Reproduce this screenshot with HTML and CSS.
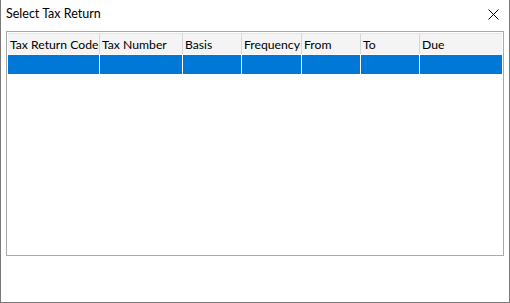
FILE: index.html
```html
<!DOCTYPE html>
<html lang="en">
<head>
  <meta charset="UTF-8" />
  <title>Select Tax Return</title>
  <link rel="stylesheet" href="styles.css">
</head>
<body>
  <div class="window">
    <!-- Title bar -->
    <div class="titlebar">
      <span class="title">Select Tax Return</span>
      <svg class="close" width="11" height="11" viewBox="0 0 11 11">
        <path d="M0.5 0.5 L10.5 10.5 M10.5 0.5 L0.5 10.5" stroke="#000" stroke-width="1" fill="none"/>
      </svg>
    </div>

    <!-- List view -->
    <div class="listview">
      <div class="lv-row lv-header">
        <div class="cell c1">Tax Return Code</div>
        <div class="cell c2">Tax Number</div>
        <div class="cell c3">Basis</div>
        <div class="cell c4">Frequency</div>
        <div class="cell c5">From</div>
        <div class="cell c6">To</div>
        <div class="cell c7">Due</div>
      </div>
      <div class="lv-row lv-selected">
        <div class="cell c1"></div>
        <div class="cell c2"></div>
        <div class="cell c3"></div>
        <div class="cell c4"></div>
        <div class="cell c5"></div>
        <div class="cell c6"></div>
        <div class="cell c7"></div>
      </div>
    </div>
  </div>
</body>
</html>
```
FILE: styles.css
```css
* {
  box-sizing: border-box;
}

body {
  margin: 0;
  background: #fff;
  font-family: 'Lato', 'Noto Sans', sans-serif;
  font-size: 12.5px;
  color: #000;
}

.window {
  width: 510px;
  height: 303px;
  background: #fff;
  border: 1px solid #7a7a7a;
  border-top: none;
}

.titlebar {
  height: 31px;
  display: flex;
  align-items: center;
  justify-content: space-between;
  padding: 0 10px 4px 5px;
}

.title {
  line-height: 16px;
}

.close {
  display: block;
  margin-top: 1px;
}

.listview {
  margin-left: 5px;
  width: 498px;
  height: 225px;
  border: 1px solid #a9a9a9;
  padding: 1px;
}

.lv-row {
  display: flex;
}

.lv-header {
  height: 21px;
  background: #f4f4f4;
  border-top: 1px solid #e6e6e6;
  font-size: 12.2px;
}

.lv-header .cell {
  border-right: 1px solid #d6d6d6;
  padding: 1px 0 0 2px;
  line-height: 19px;
  white-space: nowrap;
  overflow: hidden;
}

.lv-selected {
  height: 19px;
  margin-top: 1px;
  background: #0078d7;
}

.lv-selected .cell {
  border-right: 1px solid #fff;
}

.cell.c1 { width: 92px; }
.cell.c2 { width: 83px; }
.cell.c3 { width: 59px; }
.cell.c4 { width: 60px; }
.cell.c5 { width: 59px; }
.cell.c6 { width: 59px; }
.cell.c7 { width: 82px; border-right: none; }
```
